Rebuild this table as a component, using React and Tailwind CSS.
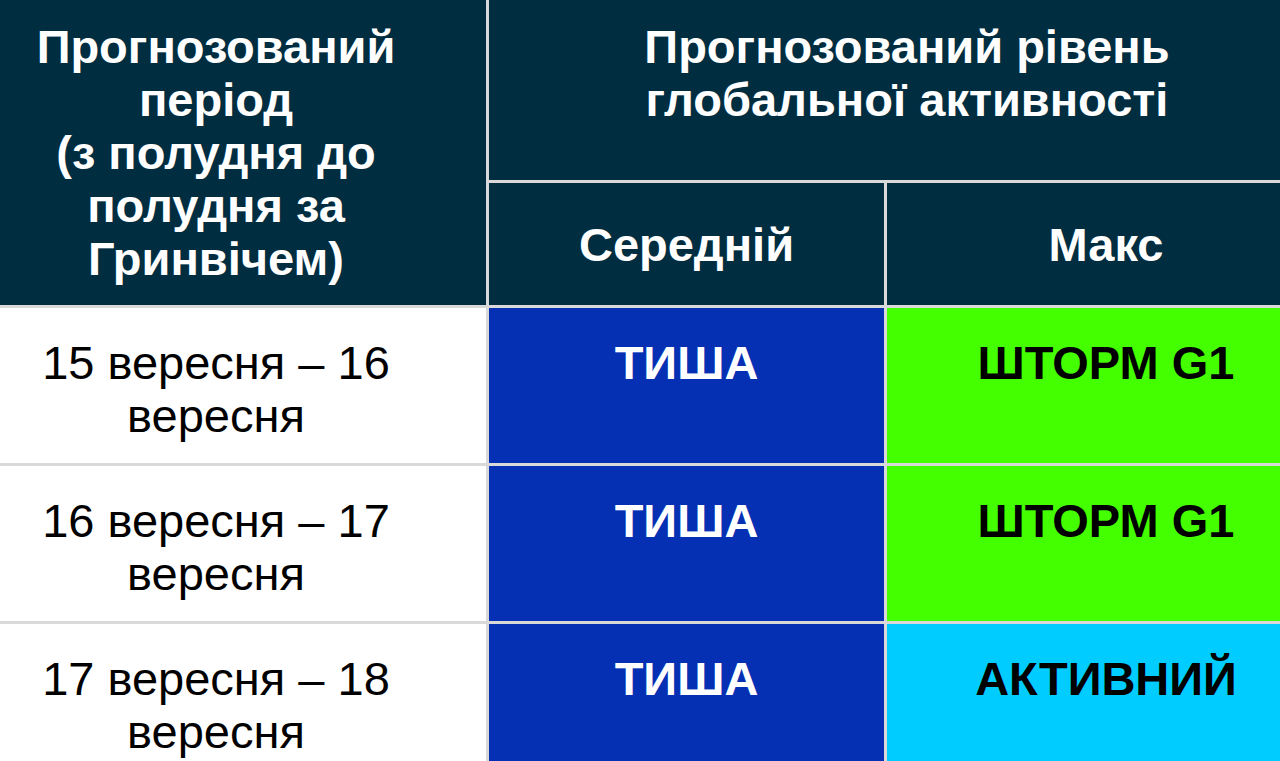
import React from 'react';

const rows = [
  { from: '15 вересня – 16', to: 'вересня', avg: 'ТИША', max: 'ШТОРМ G1', maxBg: 'bg-[#44ff00]' },
  { from: '16 вересня – 17', to: 'вересня', avg: 'ТИША', max: 'ШТОРМ G1', maxBg: 'bg-[#44ff00]' },
  { from: '17 вересня – 18', to: 'вересня', avg: 'ТИША', max: 'АКТИВНИЙ', maxBg: 'bg-[#00ccff]' },
];

const App = () => {
  return (
    <div className="w-[1280px] h-[761px] overflow-hidden bg-white" style={{ fontFamily: '"Liberation Sans", Arial, sans-serif' }}>
      <div className="ml-[-54px] w-[1379px] grid grid-cols-[540px_395px_438px] grid-rows-[180px_122px_155px_155px_155px] gap-[3px] bg-[#d9d9d9] text-[47px] leading-[53px]">
        {/* шапка */}
        <div className="row-span-2 bg-[#012d41] text-white font-bold text-center pt-[20px]">
          Прогнозований<br />період<br />(з полудня до<br />полудня за<br />Гринвічем)
        </div>
        <div className="col-span-2 bg-[#012d41] text-white font-bold text-center pt-[20px]">
          Прогнозований рівень<br />глобальної активності
        </div>
        <div className="bg-[#012d41] text-white font-bold flex items-center justify-center">Середній</div>
        <div className="bg-[#012d41] text-white font-bold flex items-center justify-center">Макс</div>

        {/* рядки */}
        {rows.map((r, i) => (
          <React.Fragment key={i}>
            <div className="bg-white text-black text-center pt-[28px]">
              {r.from}<br />{r.to}
            </div>
            <div className="bg-[#0530b4] text-white font-bold text-center pt-[28px]">{r.avg}</div>
            <div className={`${r.maxBg} text-black font-bold text-center pt-[28px]`}>{r.max}</div>
          </React.Fragment>
        ))}
      </div>
    </div>
  );
};

export default App;
